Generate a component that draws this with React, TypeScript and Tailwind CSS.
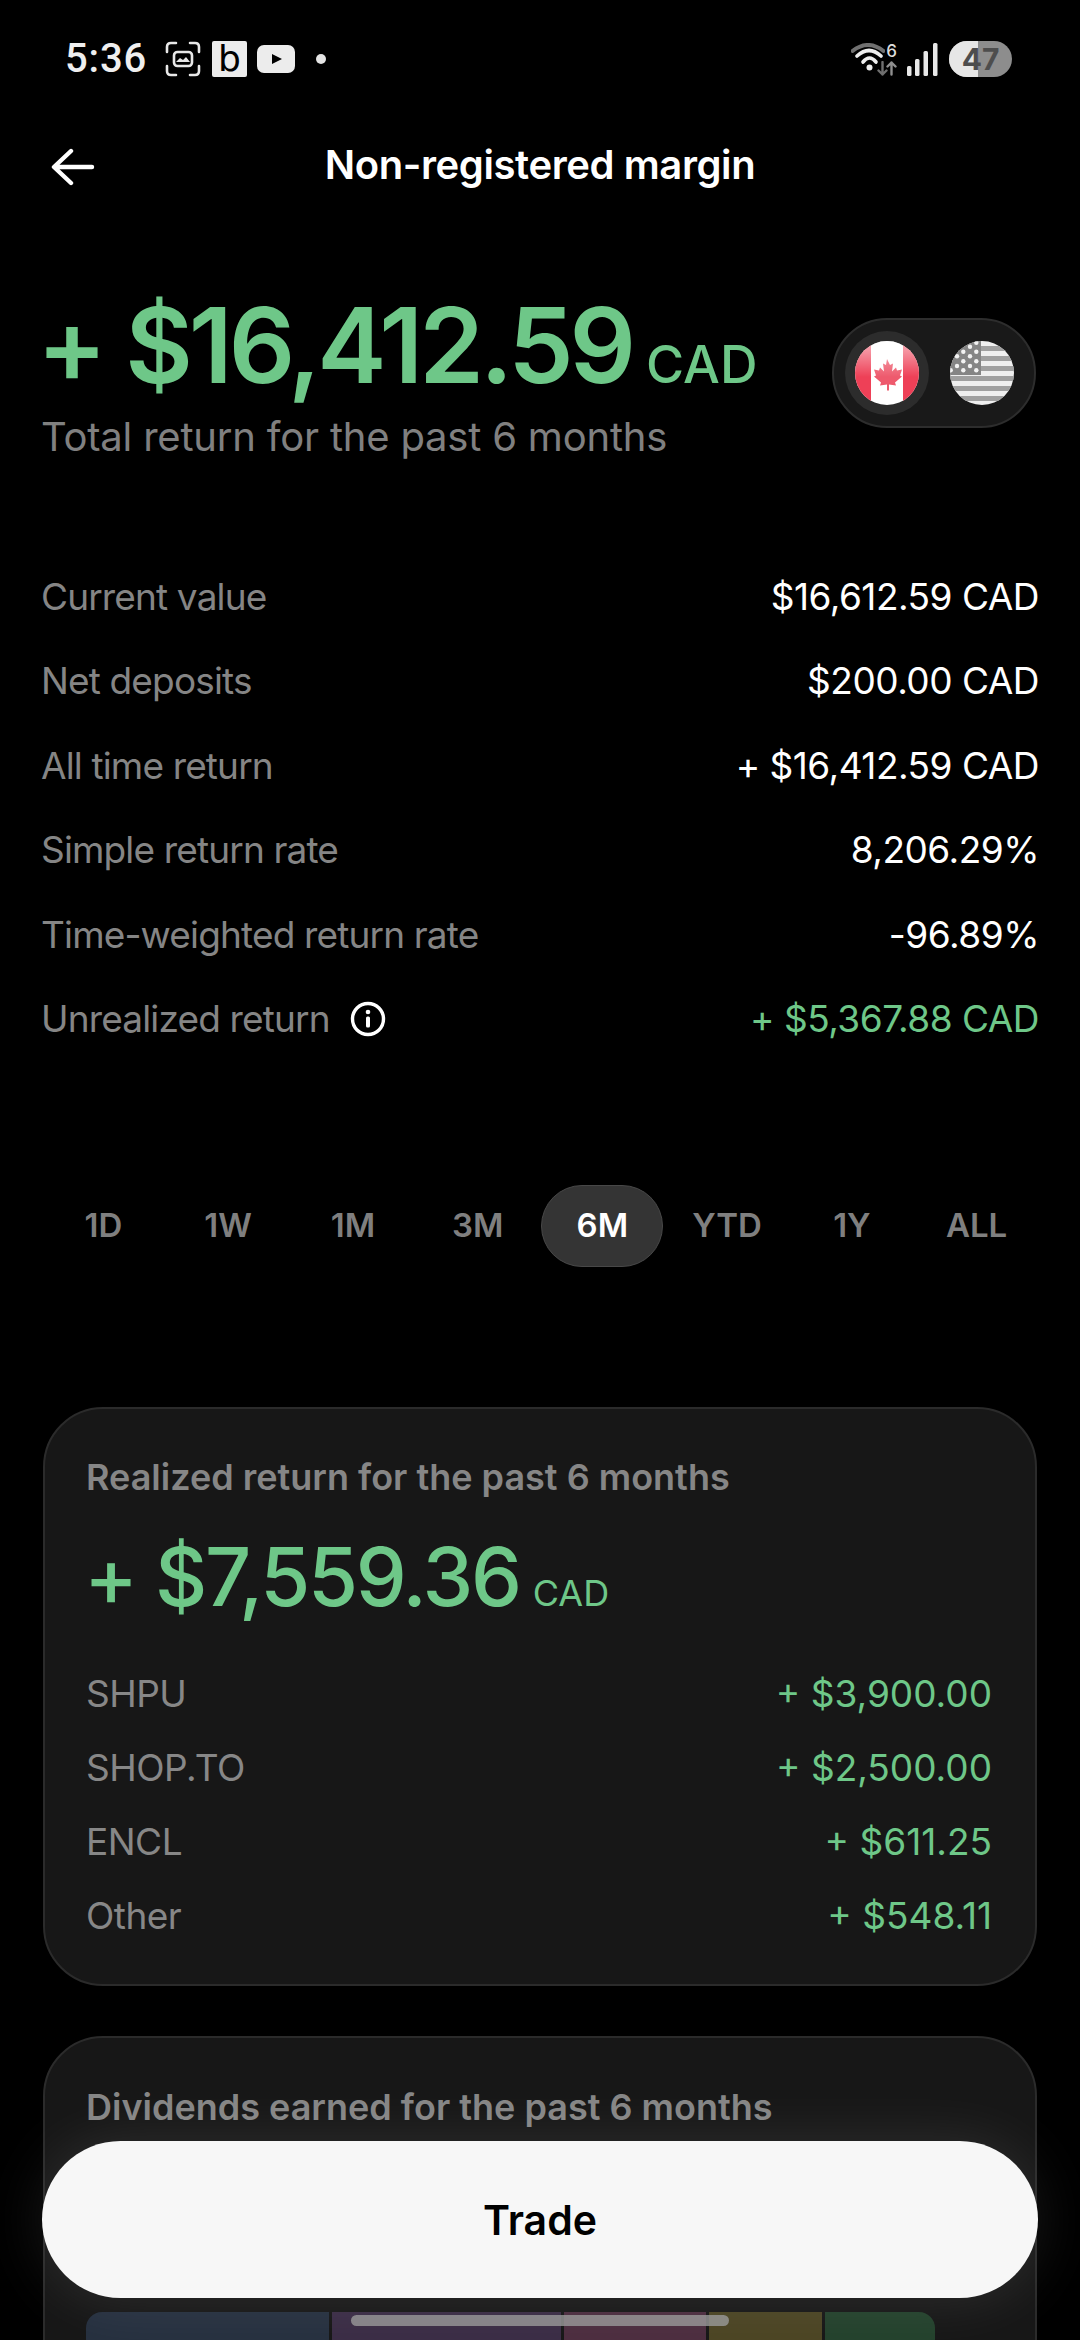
import React from "react";

const font = { fontFamily: "Inter, 'Liberation Sans', sans-serif" };

function ScreenshotIcon() {
  return (
    <svg width="36" height="36" viewBox="0 0 36 36" fill="none" stroke="#e8e8e8" strokeWidth="2.6" strokeLinecap="round">
      <path d="M2 11V6q0-4 4-4h5M25 2h5q4 0 4 4v5M34 25v5q0 4-4 4h-5M11 34H6q-4 0-4-4v-5" />
      <rect x="9" y="11" width="18" height="14" rx="3.5" strokeWidth="2.6" />
      <path d="M11 21l4-4 3 2 3-3 4 5z" fill="#e8e8e8" stroke="none" />
    </svg>
  );
}

function YouTubeIcon() {
  return (
    <svg width="38" height="28" viewBox="0 0 38 28">
      <rect x="0" y="0" width="38" height="28" rx="7" fill="#ececec" />
      <path d="M15 9l10 5-10 5z" fill="#000" />
    </svg>
  );
}

function WifiIcon() {
  return (
    <svg width="34" height="28" viewBox="0 0 34 28" fill="none" strokeLinecap="round" className="absolute left-0 top-0">
      <path d="M1.500 8 Q17 -4 32.500 8" stroke="#707070" strokeWidth="4" />
      <path d="M6 13 Q18 2 30 13" stroke="#eeeeee" strokeWidth="3.600" />
      <path d="M12 19 Q18.500 11 25 19" stroke="#eeeeee" strokeWidth="3.600" />
      <circle cx="18.500" cy="24.500" r="3" fill="#eeeeee" />
    </svg>
  );
}

function ArrowsIcon() {
  return (
    <svg width="20" height="15" viewBox="0 0 20 15" fill="none" strokeWidth="2.4" strokeLinecap="round" strokeLinejoin="round">
      <path d="M5.500 1v12.500M1.500 9.500L5.500 13.500l4-4" stroke="#6f6f6f" />
      <path d="M14.500 13.500V1.500M10.500 5.500L14.500 1.500l4 4" stroke="#8f8f8f" />
    </svg>
  );
}

function SignalIcon() {
  return (
    <svg width="31" height="33" viewBox="0 0 31 33" fill="#e8e8e8">
      <rect x="0" y="23" width="4.500" height="10" rx="1.500" />
      <rect x="8" y="16" width="4.500" height="17" rx="1.500" />
      <rect x="16.500" y="8" width="4.500" height="25" rx="1.500" />
      <rect x="26" y="0" width="4.500" height="33" rx="1.500" />
    </svg>
  );
}

function BackArrow() {
  return (
    <svg width="44" height="38" viewBox="0 0 44 38" fill="none" stroke="#fff" strokeWidth="4.400" strokeLinecap="round" strokeLinejoin="round">
      <path d="M41 19H4M20 3L3 19l17 16" />
    </svg>
  );
}

function CanadaFlag() {
  return (
    <svg width="64" height="64" viewBox="0 0 64 64">
      <defs>
        <clipPath id="ca"><circle cx="32" cy="32" r="32" /></clipPath>
        <linearGradient id="gloss" x1="0" y1="0" x2="0" y2="1">
          <stop offset="0" stopColor="#fff" stopOpacity="0.6" />
          <stop offset="1" stopColor="#fff" stopOpacity="0" />
        </linearGradient>
      </defs>
      <g clipPath="url(#ca)">
        <rect width="64" height="64" fill="#fff" />
        <rect width="16" height="64" fill="#ee4057" />
        <rect x="48" width="16" height="64" fill="#ee4057" />
        <path
          d="M32 18l3 6 3-1.500-1 8 4-4 1 3 5-1-2 6 2 1-7 6 1 3-7-1v6h-2v-6l-7 1 1-3-7-6 2-1-2-6 5 1 1-3 4 4-1-8 3 1.500z"
          fill="#ee5a6d"
        />
        <rect width="64" height="36" fill="url(#gloss)" />
      </g>
    </svg>
  );
}

const usStars: [number, number][] = [
  [26.3, 1.7], [13.3, 1.7],
  [20, 5.7], [7, 5.7],
  [26.3, 10.7], [13.3, 10.7],
  [20, 15.3], [7, 15.3],
  [26.3, 20.3], [13.3, 20.3],
  [20, 25], [7, 25],
  [26.3, 29.3], [13.3, 29.3], [0.7, 29.3],
];

function UsFlag() {
  return (
    <svg width="64" height="64" viewBox="0 0 64 64">
      <defs>
        <clipPath id="us"><circle cx="32" cy="32" r="32" /></clipPath>
      </defs>
      <g clipPath="url(#us)">
        <rect width="64" height="64" fill="#efefef" />
        {[5, 15, 25, 35, 45, 55].map((y) => (
          <rect key={y} x="0" y={y} width="64" height="5" fill="#a0a0a0" />
        ))}
        <rect width="31" height="34" fill="#858585" />
        {usStars.map(([x, y], i) => (
          <circle key={i} cx={x} cy={y} r="2.200" fill="#f2f2f2" />
        ))}
      </g>
    </svg>
  );
}

function InfoIcon() {
  return (
    <svg width="36" height="36" viewBox="0 0 36 36" fill="none">
      <circle cx="18" cy="18" r="15.500" stroke="#fff" strokeWidth="3.400" />
      <circle cx="18" cy="11" r="2.300" fill="#fff" />
      <rect x="16" y="15.500" width="4" height="11" rx="1.500" fill="#fff" />
    </svg>
  );
}

const stats: { label: string; value: string; green?: boolean; info?: boolean }[] = [
  { label: "Current value", value: "$16,612.59 CAD" },
  { label: "Net deposits", value: "$200.00 CAD" },
  { label: "All time return", value: "+ $16,412.59 CAD" },
  { label: "Simple return rate", value: "8,206.29%" },
  { label: "Time-weighted return rate", value: "-96.89%" },
  { label: "Unrealized return", value: "+ $5,367.88 CAD", green: true, info: true },
];

const periods = ["1D", "1W", "1M", "3M", "6M", "YTD", "1Y", "ALL"];

const realized = [
  ["SHPU", "+ $3,900.00"],
  ["SHOP.TO", "+ $2,500.00"],
  ["ENCL", "+ $611.25"],
  ["Other", "+ $548.11"],
];

export default function App() {
  return (
    <div className="relative h-[2340px] w-[1080px] overflow-hidden bg-black text-white" style={font}>
      {/* Status bar */}
      <div className="flex h-[116px] items-center justify-between pl-[65px] pr-[68px] pt-[2px]">
        <div className="flex items-center">
          <span className="text-[40px] font-medium leading-none tracking-[0.8px] text-[#efefef]" style={{ fontFamily: "Roboto, sans-serif" }}>5:36</span>
          <span className="ml-[18px]"><ScreenshotIcon /></span>
          <span className="ml-[11px] flex h-[36px] w-[35px] items-center justify-center rounded-[2px] bg-[#ececec] text-[36px] font-normal leading-none text-black" style={{ fontFamily: "'DejaVu Sans', sans-serif" }}>b</span>
          <span className="ml-[10px]"><YouTubeIcon /></span>
          <span className="ml-[21px] h-[10px] w-[10px] rounded-full bg-[#e4e4e4]" />
        </div>
        <div className="flex items-center">
          <div className="relative h-[32px] w-[46px]">
            <WifiIcon />
            <span className="absolute right-[0px] top-[0px] text-[17px] font-medium leading-none text-[#dddddd]">6</span>
            <span className="absolute bottom-[-1px] right-[0px]"><ArrowsIcon /></span>
          </div>
          <span className="ml-[10px]"><SignalIcon /></span>
          <div className="relative ml-[11px] flex h-[36px] w-[63px] items-center justify-center overflow-hidden rounded-full bg-[#8d8d8d]">
            <span className="absolute inset-y-0 left-0 w-[29px] bg-[#e6e6e6]" />
            <span className="relative text-[30px] font-bold leading-none text-[#4d4d4d]">47</span>
          </div>
        </div>
      </div>

      {/* Header */}
      <div className="relative flex h-[102px] items-center justify-center pb-[5px]">
        <span className="absolute left-[51px] top-[32px]"><BackArrow /></span>
        <h1 className="text-[40px] font-semibold leading-none tracking-[-0.4px]">Non-registered margin</h1>
      </div>

      {/* Hero */}
      <div className="mt-[66px] flex items-start justify-between pl-[41px] pr-[44px]">
        <div>
          <div className="ml-[-4px] flex items-baseline pt-[5px] text-[#6ec788]">
            <span className="text-[104px] font-semibold leading-[112px] tracking-[-4px]">+ $16,412.59</span>
            <span className="ml-[14px] text-[52px] font-medium leading-none">CAD</span>
          </div>
          <p className="mt-[12px] text-[40px] leading-[48px] tracking-[-0.2px] text-[#808080]">Total return for the past 6 months</p>
        </div>
        <div className="mt-[34px] flex h-[110px] w-[204px] items-center rounded-full border-2 border-[#2d2d2d] bg-[#191919] pl-[11px]">
          <div className="flex h-[84px] w-[84px] items-center justify-center rounded-full bg-[#2c2c2c]">
            <CanadaFlag />
          </div>
          <span className="ml-[21px]"><UsFlag /></span>
        </div>
      </div>

      {/* Stats */}
      <div className="mt-[93px] flex flex-col pl-[41px] pr-[41px]">
        {stats.map((s) => (
          <div key={s.label} className="flex h-[84.500px] items-center justify-between text-[37px]">
            <span className="flex items-center tracking-[-0.85px] text-[#858585]">
              {s.label}
              {s.info && <span className="ml-[20px]"><InfoIcon /></span>}
            </span>
            <span className={s.green ? "tracking-[-0.5px] text-[#6ec788]" : "tracking-[-0.5px] text-white"}>{s.value}</span>
          </div>
        ))}
      </div>

      {/* Periods */}
      <div className="mt-[124px] grid grid-cols-8 px-[41px]">
        {periods.map((p) => (
          <div key={p} className="flex justify-center">
            <span
              className={
                p === "6M"
                  ? "flex h-[82px] w-[122px] items-center justify-center rounded-full border border-[#484848] bg-[#343434] text-[33px] font-semibold text-white"
                  : "flex h-[82px] w-[122px] items-center justify-center text-[33px] font-semibold text-[#7f7f7f]"
              }
            >
              {p}
            </span>
          </div>
        ))}
      </div>

      {/* Realized card */}
      <div className="mx-[43px] mt-[140px] h-[579px] rounded-[60px] border-2 border-[#2b2b2b] bg-[#171717] pl-[41px] pr-[43px] pt-[46px]">
        <p className="text-[36px] font-semibold leading-[44px] text-[#868686]">Realized return for the past 6 months</p>
        <div className="ml-[-2px] mt-[28px] flex items-baseline text-[#6ec788]">
          <span className="text-[81px] font-medium leading-[100px] tracking-[-2.3px]">+ $7,559.36</span>
          <span className="ml-[13px] text-[36px] font-normal leading-none">CAD</span>
        </div>
        <div className="mt-[30px] flex flex-col">
          {realized.map(([k, v]) => (
            <div key={k} className="flex h-[74px] items-center justify-between text-[37px]">
              <span className="tracking-[-0.5px] text-[#878787]">{k}</span>
              <span className="text-[#6ec788]">{v}</span>
            </div>
          ))}
        </div>
      </div>

      {/* Dividends card */}
      <div className="mx-[43px] mt-[50px] h-[400px] rounded-[60px] border-2 border-[#2b2b2b] bg-[#171717] pl-[41px] pr-[43px] pt-[47px]">
        <p className="text-[36px] font-semibold leading-[44px] text-[#868686]">Dividends earned for the past 6 months</p>
        <div className="mt-[183px] flex h-[80px] w-[849px] gap-[3px]">
          <div className="w-[243px] rounded-tl-[16px] bg-[#26303f]" />
          <div className="w-[229px] bg-[#3a2c45]" />
          <div className="w-[142px] bg-[#4c2d3f]" />
          <div className="w-[113px] bg-[#4b4423]" />
          <div className="w-[110px] rounded-tr-[16px] bg-[#23412c]" />
        </div>
      </div>

      {/* Floating trade button */}
      <div className="absolute left-[42px] top-[2141px] flex h-[157px] w-[996px] items-center justify-center rounded-full bg-[#f7f7f7] pt-[2px] shadow-[0_0_60px_rgba(255,255,255,0.1)]">
        <span className="text-[41px] font-semibold text-black">Trade</span>
      </div>

      {/* Home indicator */}
      <div className="absolute left-[351px] top-[2315px] h-[11px] w-[378px] rounded-full bg-[#9a9a9a]/80" />
    </div>
  );
}
